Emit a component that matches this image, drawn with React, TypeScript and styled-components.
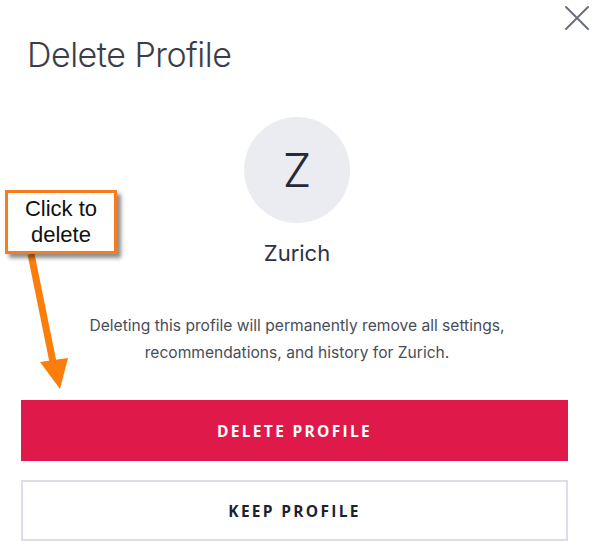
import React from "react";
import styled, { createGlobalStyle } from "styled-components";

const GlobalStyle = createGlobalStyle`
  html, body { margin: 0; padding: 0; background: #ffffff; }
  body { font-family: Inter, "Noto Sans", Arial, sans-serif; }
  * { box-sizing: border-box; }
`;

const Modal = styled.div`
  position: relative;
  width: 600px;
  height: 557px;
  background: #ffffff;
  padding: 0 32px 0 21px;
  display: flex;
  flex-direction: column;
  overflow: hidden;
`;

const Header = styled.div`
  display: flex;
  justify-content: space-between;
  align-items: flex-start;
  padding-top: 5px;
  margin-right: -22px;
`;

const Title = styled.h1`
  margin: 28px 0 0 6px;
  font-family: Inter, sans-serif;
  font-weight: 300;
  font-size: 34px;
  line-height: 44px;
  color: #3b3e4a;
  letter-spacing: -0.5px;
`;

const CloseButton = styled.button`
  width: 26px;
  height: 26px;
  padding: 0;
  border: none;
  background: none;
  display: flex;
  align-items: center;
  justify-content: center;
  cursor: pointer;
`;

const ProfileBlock = styled.div`
  display: flex;
  flex-direction: column;
  align-items: center;
  margin-top: 40px;
  padding-left: 5px;
`;

const Avatar = styled.div`
  width: 106px;
  height: 106px;
  border-radius: 50%;
  background: #ebecf2;
  display: flex;
  align-items: center;
  justify-content: center;
  font-family: Inter, sans-serif;
  font-weight: 300;
  font-size: 46px;
  color: #262936;
`;

const Name = styled.div`
  margin-top: 16px;
  font-family: Inter, sans-serif;
  font-size: 22px;
  font-weight: 400;
  line-height: 28px;
  color: #2e3140;
`;

const Description = styled.p`
  margin: 45px 0 0;
  padding-left: 5px;
  text-align: center;
  font-family: Inter, sans-serif;
  font-size: 15.6px;
  line-height: 27px;
  color: #4a4d5a;
`;

const Actions = styled.div`
  display: flex;
  flex-direction: column;
  gap: 19px;
  margin-top: 34px;
`;

const ActionButton = styled.button<{ $variant: "danger" | "outline" }>`
  height: 61px;
  width: 547px;
  display: flex;
  align-items: center;
  justify-content: center;
  font-family: "Open Sans", sans-serif;
  font-weight: 700;
  font-size: 15.5px;
  letter-spacing: 2.3px;
  cursor: pointer;
  background: ${(p) => (p.$variant === "danger" ? "#df1a4a" : "#ffffff")};
  color: ${(p) => (p.$variant === "danger" ? "#ffffff" : "#1d2233")};
  border: ${(p) => (p.$variant === "danger" ? "none" : "2px solid #dcdde8")};
`;

const Callout = styled.div`
  position: absolute;
  left: 5px;
  top: 190px;
  width: 112px;
  height: 64px;
  border: 3px solid #f57c1f;
  background: #ffffff;
  box-shadow: 4px 4px 4px rgba(0, 0, 0, 0.45);
  display: flex;
  align-items: center;
  justify-content: center;
  text-align: center;
  font-family: "Liberation Sans", Arial, sans-serif;
  font-size: 22px;
  line-height: 26px;
  color: #111111;
  z-index: 2;
`;

const ArrowSvg = styled.svg`
  position: absolute;
  left: 0;
  top: 250px;
  z-index: 1;
`;

export default function App() {
  return (
    <>
      <GlobalStyle />
      <Modal>
        <Header>
          <Title>Delete Profile</Title>
          <CloseButton aria-label="Close">
            <svg width="26" height="26" viewBox="0 0 26 26">
              <path d="M2 2 L24 24 M24 2 L2 24" stroke="#6c6f7c" strokeWidth="2" strokeLinecap="round" />
            </svg>
          </CloseButton>
        </Header>
        <ProfileBlock>
          <Avatar>Z</Avatar>
          <Name>Zurich</Name>
        </ProfileBlock>
        <Description>
          Deleting this profile will permanently remove all settings,
          <br />
          recommendations, and history for Zurich.
        </Description>
        <Actions>
          <ActionButton $variant="danger">DELETE PROFILE</ActionButton>
          <ActionButton $variant="outline">KEEP PROFILE</ActionButton>
        </Actions>
        <ArrowSvg width="90" height="150" viewBox="0 0 90 150">
          <path d="M31 4 L53 112" stroke="#fb7d0c" strokeWidth="7" strokeLinecap="butt" />
          <path d="M40 112 L60 139 L68 108 Z" fill="#fb7d0c" />
        </ArrowSvg>
        <Callout>
          Click to
          <br />
          delete
        </Callout>
      </Modal>
    </>
  );
}
